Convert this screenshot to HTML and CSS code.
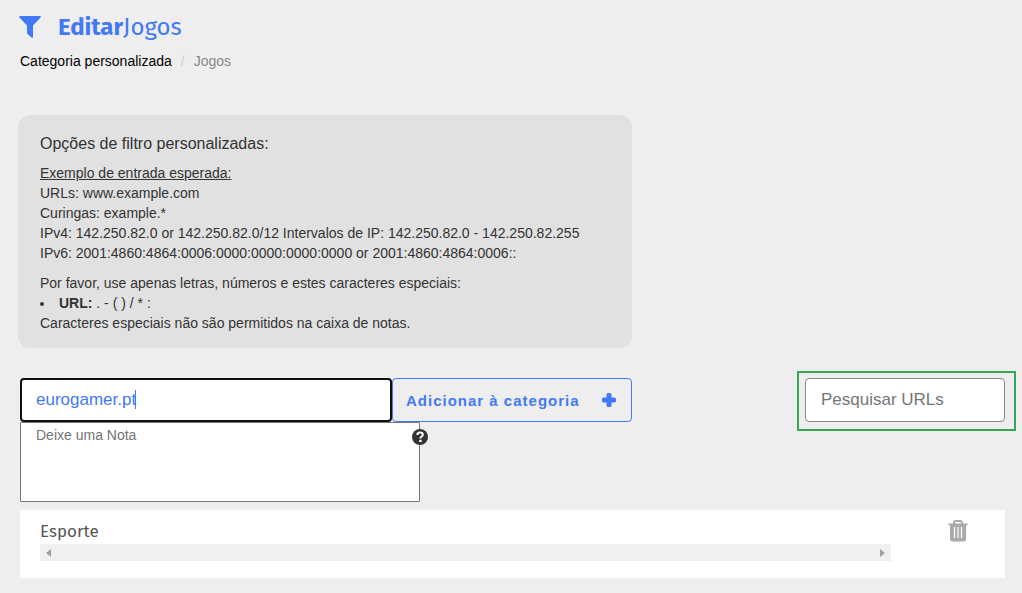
FILE: index.html
```
<!DOCTYPE html>
<html lang="pt-br">
<head>
    <meta charset="UTF-8">
    <meta name="viewport" content="width=device-width, initial-scale=1.0">
    <title>Editar Jogos</title>
    <link rel="stylesheet" href="styles.css">
</head>
<body>
    <header class="topo">
        <svg class="icone-filtro" viewBox="0 0 22 22" aria-hidden="true">
            <path d="M1 0h20q1.500 .5.600 1.600L14 9.500V21q-.3 1.300-1.500.6L8.600 18q-.6-.5-.6-1.300V9.500L.4 1.600Q-.4.500 1 0z"/>
        </svg>
        <h1><strong>Editar</strong>Jogos</h1>
    </header>

    <nav class="caminho" aria-label="Caminho">
        <a href="#">Categoria personalizada</a>
        <span class="barra">/</span>
        <span class="atual">Jogos</span>
    </nav>

    <section class="ajuda">
        <h2>Opções de filtro personalizadas:</h2>
        <p>
            <u>Exemplo de entrada esperada:</u><br>
            URLs: www.example.com<br>
            Curingas: example.*<br>
            IPv4: 142.250.82.0 or 142.250.82.0/12 Intervalos de IP: 142.250.82.0 - 142.250.82.255<br>
            IPv6: 2001:4860:4864:0006:0000:0000:0000:0000 or 2001:4860:4864:0006::
        </p>
        <p>Por favor, use apenas letras, números e estes caracteres especiais:</p>
        <ul>
            <li><strong>URL:</strong> . - ( ) / * :</li>
        </ul>
        <p>Caracteres especiais não são permitidos na caixa de notas.</p>
    </section>

    <div class="acoes">
        <form class="adicionar">
            <div class="linha">
                <div class="caixa-url">
                    <input type="text" class="campo-url" value="eurogamer.pt" aria-label="URL" autofocus>
                    <span class="cursor"></span>
                </div>
                <button type="button" class="btn-adicionar">
                    Adicionar à categoria
                    <svg viewBox="0 0 14 14" aria-hidden="true">
                        <path d="M6 0h2q1.500 0 1.500 1.500v3h3q1.500 0 1.500 1.500v2q0 1.500-1.500 1.500h-3v3Q9.500 14 8 14H6q-1.500 0-1.500-1.500v-3h-3Q0 9.500 0 8V6q0-1.500 1.500-1.500h3v-3Q4.500 0 6 0z"/>
                    </svg>
                </button>
            </div>
            <div class="nota">
                <textarea placeholder="Deixe uma Nota" aria-label="Nota"></textarea>
                <button type="button" class="btn-duvida" aria-label="Ajuda">
                    <svg viewBox="0 0 16 16" aria-hidden="true">
                        <circle cx="8" cy="8" r="8" fill="#333"/>
                        <path d="M5.300 6.100C5.300 4.300 6.400 3.500 8 3.500s2.800.9 2.800 2.300c0 1.700-2.400 1.800-2.400 3.600" fill="none" stroke="#fff" stroke-width="2"/>
                        <path d="M7.200 10.800h2.400v2.200H7.200z" fill="#fff"/>
                    </svg>
                </button>
            </div>
        </form>
        <div class="destaque">
            <input type="search" class="pesquisa" placeholder="Pesquisar URLs" aria-label="Pesquisar URLs">
        </div>
    </div>

    <main class="item">
        <div class="item-texto">
            <h3>Esporte</h3>
            <div class="rolagem">
                <svg viewBox="0 0 5 8" aria-hidden="true"><path d="M5 0v8L0 4z"/></svg>
                <svg viewBox="0 0 5 8" aria-hidden="true"><path d="M0 0v8l5-4z"/></svg>
            </div>
        </div>
        <button type="button" class="btn-excluir" aria-label="Excluir">
            <svg viewBox="0 0 20 22" aria-hidden="true">
                <path d="M6 4V2.500Q6.300 1 7.500 1h5Q13.700 1 14 2.500V4" fill="none" stroke="#aaa" stroke-width="2"/>
                <path d="M1 3.500h18q.8 0 .8.800T19 5.200h-.9V19q0 2.500-2.200 2.500H4.200Q2 21.500 2 19V5.200H1q-.8 0-.8-.9T1 3.500z" fill="#aaa"/>
                <path d="M6.500 7v11M10 7v11M13.500 7v11" stroke="#fff" stroke-width="1.200"/>
            </svg>
        </button>
    </main>
</body>
</html>
```
FILE: styles.css
```
* {
    box-sizing: border-box;
}
body {
    background-color: #eee;
    color: #333;
    font-family: "Liberation Sans", Arial, sans-serif;
    font-size: 14px;
    line-height: 20px;
    margin: 0;
    padding: 12px 17px 15px 20px;
}
h1, h2, h3, p, ul {
    margin: 0;
}
button {
    font-family: inherit;
    cursor: pointer;
}
svg {
    display: block;
}
.topo {
    display: flex;
    align-items: center;
    gap: 17px;
    margin-left: -1px;
    color: #4479f5;
}
.topo h1 {
    font-family: "Fira Sans", "Noto Sans", sans-serif;
    font-size: 24px;
    font-weight: 400;
    line-height: 30px;
}
.icone-filtro {
    width: 22px;
    height: 22px;
    fill: #4479f5;
}
.caminho {
    display: flex;
    gap: 9px;
    margin-top: 9px;
}
.caminho a {
    color: #000;
    text-decoration: none;
}
.barra {
    color: #ccc;
}
.atual {
    color: #888;
}
.ajuda {
    max-width: 614px;
    margin: 44px 0 30px -2px;
    padding: 18px 22px 15px;
    background-color: #e1e1e1;
    border-radius: 12px;
}
.ajuda h2 {
    font-size: 16px;
    font-weight: 400;
    line-height: 22px;
    margin-bottom: 8px;
}
.ajuda h2 + p {
    margin-bottom: 10px;
}
.ajuda ul {
    padding: 0;
    list-style-position: inside;
}
.acoes {
    display: flex;
    justify-content: space-between;
    align-items: flex-start;
}
.adicionar {
    flex: 0 1 612px;
}
.linha {
    display: flex;
}
.caixa-url {
    position: relative;
    flex: 1;
}
.campo-url {
    display: block;
    width: 100%;
    height: 44px;
    padding: 0 14px;
    border: 2px solid #101010;
    border-radius: 4px;
    outline: none;
    background-color: #fff;
    color: #4479f5;
    caret-color: transparent;
    font-family: inherit;
    font-size: 17px;
}
.cursor {
    position: absolute;
    top: 12px;
    left: 115px;
    width: 1px;
    height: 19px;
    background-color: #4479f5;
}
.btn-adicionar {
    display: flex;
    align-items: center;
    justify-content: space-between;
    width: 240px;
    padding: 0 15px 0 13px;
    border: 1px solid #4479f5;
    border-radius: 4px;
    background: none;
    color: #4479f5;
    font-size: 15px;
    font-weight: bold;
    letter-spacing: 1px;
}
.btn-adicionar svg {
    width: 14px;
    height: 14px;
    fill: #4479f5;
}
.nota {
    position: relative;
    max-width: 400px;
}
.nota textarea {
    display: block;
    width: 100%;
    height: 80px;
    padding: 4px 15px;
    border: 1px solid #767676;
    border-radius: 1px;
    resize: none;
    font-family: inherit;
    font-size: 14px;
}
::placeholder {
    color: #757575;
}
.btn-duvida {
    position: absolute;
    top: 7px;
    right: -8px;
    padding: 0;
    border: none;
    background: none;
}
.btn-duvida svg {
    width: 16px;
    height: 16px;
}
.destaque {
    margin: -7px -11px 0 0;
    padding: 5px 9px 7px 6px;
    border: 2px solid #34a853;
}
.pesquisa {
    display: block;
    width: 200px;
    height: 44px;
    padding: 0 15px;
    border: 1px solid #888;
    border-radius: 4px;
    background-color: #fff;
    font-family: inherit;
    font-size: 17px;
}
.item {
    display: flex;
    align-items: flex-start;
    gap: 57px;
    margin-top: 8px;
    padding: 10px 37px 17px 20px;
    background-color: #fff;
}
.item-texto {
    flex: 1;
}
.item h3 {
    color: #555;
    font-family: "Fira Sans", "Noto Sans", sans-serif;
    font-size: 17px;
    font-weight: 400;
    line-height: 24px;
}
.rolagem {
    display: flex;
    align-items: center;
    justify-content: space-between;
    height: 17px;
    padding: 0 6px;
    background-color: #f0f0f0;
}
.rolagem svg {
    width: 5px;
    height: 8px;
    fill: #a0a0a0;
}
.btn-excluir {
    padding: 0;
    border: none;
    background: none;
}
.btn-excluir svg {
    width: 20px;
    height: 22px;
}
```
